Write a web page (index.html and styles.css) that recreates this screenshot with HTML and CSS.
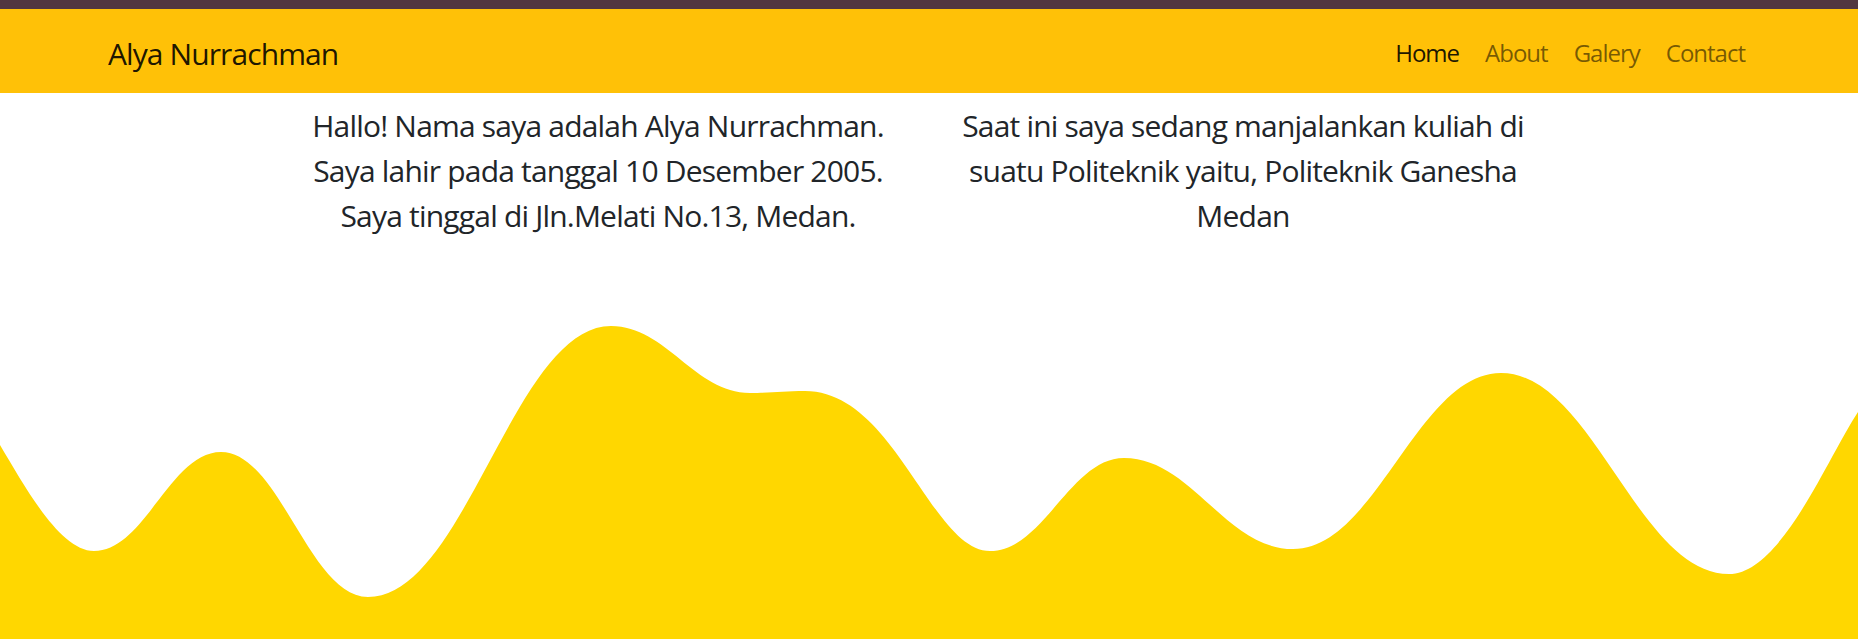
FILE: index.html
```html
<!DOCTYPE html>
<html lang="id">
<head>
<meta charset="utf-8">
<title>Alya Nurrachman</title>
<link rel="stylesheet" href="styles.css">
</head>
<body>
<div class="topbar"></div>
<nav class="navbar">
  <div class="nav-inner">
    <a class="brand" href="#">Alya Nurrachman</a>
    <ul class="nav-links">
      <li><a class="nav-link active" href="#">Home</a></li>
      <li><a class="nav-link" href="#">About</a></li>
      <li><a class="nav-link" href="#">Galery</a></li>
      <li><a class="nav-link" href="#">Contact</a></li>
    </ul>
  </div>
</nav>
<main class="intro">
  <p class="col">Hallo! Nama saya adalah Alya Nurrachman.<br>Saya lahir pada tanggal 10 Desember 2005.<br>Saya tinggal di Jln.Melati No.13, Medan.</p>
  <p class="col">Saat ini saya sedang manjalankan kuliah di<br>suatu Politeknik yaitu, Politeknik Ganesha<br>Medan</p>
</main>
<div class="wave">
  <svg viewBox="0 0 1858 339" preserveAspectRatio="none" xmlns="http://www.w3.org/2000/svg">
    <path fill="#ffd700" d="M0,145 C25,187 60,251 94,251 C144.8,251 170.2,152 221,152 C279.8,152 309.2,297 368,297 C465.2,297 513.8,26 611,26 C666.6,26 694.4,93 750,93 C772,93 783,91 805,91 C895,91 931,251 990,251 C1043.6,251 1070.4,158 1124,158 C1191.6,158 1225.4,249 1293,249 C1376.2,249 1417.8,73 1501,73 C1592.2,73 1637.8,274 1729,274 C1781,274 1828,157 1858,112 L1858,339 L0,339 Z"/>
  </svg>
</div>
</body>
</html>
```

FILE: styles.css
```css
* { box-sizing: border-box; }
html, body { margin: 0; padding: 0; }
body {
  font-family: "Open Sans", "Noto Sans", sans-serif;
  color: #212529;
  background: #ffffff;
  overflow: hidden;
}
.topbar {
  height: 9px;
  background: #523740;
}
.navbar {
  background: #ffc107;
  height: 84px;
}
.nav-inner {
  height: 100%;
  display: flex;
  align-items: center;
  justify-content: space-between;
  padding: 0 100px 0 108px;
}
.brand {
  font-size: 30px;
  line-height: 45px;
  letter-spacing: -0.9px;
  padding-top: 5px;
  color: rgba(0, 0, 0, 0.9);
  text-decoration: none;
  white-space: nowrap;
}
.nav-links {
  display: flex;
  list-style: none;
  margin: 0;
  padding: 0;
}
.nav-link {
  display: block;
  font-size: 24px;
  line-height: 36px;
  letter-spacing: -1px;
  padding: 4px 13px 0;
  color: rgba(0, 0, 0, 0.55);
  text-decoration: none;
}
.nav-link.active { color: rgba(0, 0, 0, 0.9); }
.intro {
  height: 207px;
  display: flex;
  gap: 35px;
  padding: 10px 0 0 293px;
}
.col {
  width: 610px;
  margin: 0;
  font-size: 30px;
  line-height: 45px;
  letter-spacing: -0.8px;
  text-align: center;
  white-space: nowrap;
}
.wave svg {
  display: block;
  width: 100%;
  height: 339px;
}
```
